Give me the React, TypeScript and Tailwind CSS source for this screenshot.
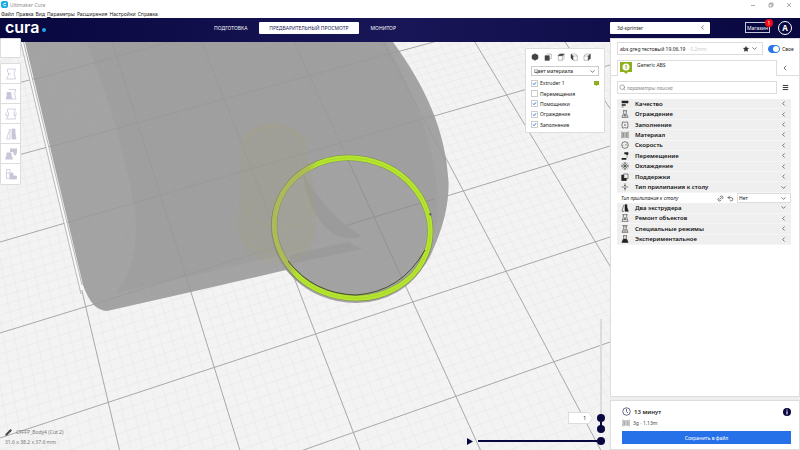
import { ReactNode } from "react";
import { ChevronDown, ChevronLeft, Link2, Menu, Pencil, Search, Star, Undo2 } from "lucide-react";

type Category = {
  name: string;
  icon: ReactNode;
  open?: boolean;
};

const menus = ["Файл", "Правка", "Вид", "Параметры", "Расширения", "Настройки", "Справка"];

const figure = "M2.500 1h8L9 5l1.500 6h-9L3.500 7V5L2.500 4z";

const categories: Category[] = [
  { name: "Качество", icon: <path d="M1 1h10v4H1zM1 6.500h6v2H1zM1 10h3v1H1z" fill="currentColor" stroke="none" /> },
  { name: "Ограждение", icon: <path d="M3 1h6M4 1v4L1.500 11h9L8 5V1M4.500 9l1-3h1l1 3z" /> },
  { name: "Заполнение", icon: <path d="M3.500 1.500H2v3L1 6l1 1.500v3h3l1-1 1 1h3v-3L11 6l-1-1.500v-3H7l-1 1-1-1zM5 5l2 2M7 5L5 7" /> },
  { name: "Материал", icon: <path d="M1.500 1v10M3.500 2v8M6 1.500v9M8.500 2v8M10.600 1v10" /> },
  {
    name: "Скорость",
    icon: (
      <>
        <circle cx="6" cy="6" r="5" />
        <path d="M6 6.500l2.500-2M2.500 6.500h1M8.500 6.500h1" />
      </>
    ),
  },
  { name: "Перемещение", icon: <path d="M5 .5h6v3L9 5.500 7.500 3.500H5zM1 9h7v2.500H1zM8 7h2v1H8z" fill="currentColor" stroke="none" /> },
  { name: "Охлаждение", icon: <path d="M6 .8v10.400M.8 6h10.400M2.300 2.300l7.400 7.400M9.700 2.300L2.300 9.700M4 1.500h4M4 10.500h4M1.500 4v4M10.500 4v4" /> },
  {
    name: "Поддержки",
    icon: (
      <>
        <path d="M4 1.500h6.500v7H4z" />
        <path d="M1 3h3v5h4v3.500H1z" fill="currentColor" />
      </>
    ),
  },
  { name: "Тип прилипания к столу", open: true, icon: <path d="M1 6h10M6 .5v4M4.500 3L6 4.500 7.500 3M6 11.500v-4M4.500 9L6 7.500 7.500 9" /> },
];

const extraCategories: Category[] = [
  {
    name: "Два экструдера",
    open: true,
    icon: (
      <>
        <path d="M4.500 1L3 5l-1.500 6h3" />
        <path d="M6 1h3v4l2 6H6z" fill="currentColor" />
      </>
    ),
  },
  { name: "Ремонт объектов", icon: <path d="M2 1h8M3.500 1v3.500L1.500 11h9L8.500 4.500V1M4 9l2-4 2 4M4.500 8h3" /> },
  { name: "Специальные режимы", icon: <path d="M2 1h8M4 1v4L1.500 11h9L8 5V1M5 3h2M4 7h4M3.500 9h5" /> },
  {
    name: "Экспериментальное",
    icon: (
      <>
        <path d="M3 1h6M4 1v4L1.500 11h9L8 5V1" />
        <path d="M4 6h4l2.500 5h-9z" fill="currentColor" />
      </>
    ),
  },
];

const toolIcons: ReactNode[] = [
  <>
    <path d={figure} />
    <path d="M3.500 6H6" />
  </>,
  <>
    <path d="M4 1.500h7L9.500 5l1.500 6H7" />
    <path d="M2 4.500h4V8l1 3H1l1-3z" fill="currentColor" />
  </>,
  <>
    <path d={figure} />
    <path d="M1 4.500v3h2M11 4.500v3H9" />
  </>,
  <>
    <path d="M5 1L3.500 5l-2 6H5z" />
    <path d="M7 1h3v4l1 6H7z" fill="currentColor" />
  </>,
  <path d="M1.500 4.500h5V7l1.500 4.500H0L1.500 7zM5 .5h7v4l-1 3-2-.5-1-3H5z" fill="currentColor" stroke="none" />,
  <>
    <path d="M1.500 1.500H5v9H1.500zM1.500 5H5" />
    <path d="M5 5h3v3h3.500v3H5z" fill="currentColor" />
  </>,
];

const viewIcons: ReactNode[] = [
  <path d="M6 1l4.500 2.500v5L6 11 1.500 8.500v-5z" fill="currentColor" />,
  <>
    <path d="M4 1.500h7v7H9" strokeWidth="0.5" />
    <path d="M1.500 4H8v7H1.500z" fill="currentColor" />
  </>,
  <>
    <path d="M2 4.500v6.500h6V4.500M8 11l2.500-2.500V2" strokeWidth="0.5" />
    <path d="M1.500 4L4 1.500h7L8.500 4z" fill="currentColor" />
  </>,
  <>
    <path d="M4.500 4.500H11V11H4.500L2 8.500M2 1.500h6.500L11 4.500" strokeWidth="0.5" />
    <path d="M1.500 1.500l3 3v6l-3-3z" fill="currentColor" />
  </>,
  <>
    <path d="M1.500 4.500H8V11H1.500zM1.500 4.500L4 1.500h7" strokeWidth="0.5" />
    <path d="M8 4.500l3-3v6.500l-3 3z" fill="currentColor" />
  </>,
];

const layers = [
  { name: "Extruder 1", on: true, color: true },
  { name: "Перемещения", on: false },
  { name: "Помощники", on: true },
  { name: "Ограждение", on: true },
  { name: "Заполнение", on: true },
];

// Build plate lines: where each one crosses the left and right edge of the view
const rows = [
  [22, -160],
  [88, -78],
  [160, -6],
  [242, 65],
  [333, 146],
  [438, 237],
  [557, 342],
  [690, 461],
];

const Icon = ({ children, className = "size-2" }: { children: ReactNode; className?: string }) => (
  <svg viewBox="0 0 12 12" fill="none" stroke="currentColor" strokeWidth="0.8" className={`shrink-0 ${className}`}>
    {children}
  </svg>
);

const Grid = () => {
  const minor: ReactNode[] = [];
  const major: ReactNode[] = [];
  for (let i = -20; i <= 70; i++) {
    const line = <line key={`c${i}`} x1={23.3 + i * 9.03} y1="42" x2={119.5 + i * 12.03} y2="450" />;
    (i % 10 === 0 && i >= 0 ? major : minor).push(line);
  }
  rows.slice(0, -1).forEach(([l, r], i) => {
    const [nl, nr] = rows[i + 1];
    for (let k = 0; k < 10; k++) {
      const line = <line key={`r${i}-${k}`} x1="0" y1={l + ((nl - l) * k) / 10} x2="610" y2={r + ((nr - r) * k) / 10} />;
      (k === 0 ? major : minor).push(line);
    }
  });
  return (
    <>
      <g stroke="#e8e8e8" strokeWidth="0.6">{minor}</g>
      <g stroke="#a8a8a8" strokeWidth="1">{major}</g>
    </>
  );
};

const ring = "M275.700 211.700A78.300 69.800 12 0 1 428.900 244.300A78.300 69.800 12 0 1 275.700 211.700Z";

const Scene = () => (
  <svg viewBox="0 42 610 408" preserveAspectRatio="xMinYMin slice" className="absolute inset-0 size-full">
    <defs>
      <linearGradient id="ring" gradientUnits="userSpaceOnUse" x1="286" y1="211" x2="313" y2="216">
        <stop offset="0" stopColor="#b0b762" />
        <stop offset="0.5" stopColor="#afbd55" />
        <stop offset="0.8" stopColor="#b5e52e" />
      </linearGradient>
      <clipPath id="body">
        <path d="M25 42L83 285Q92 311 107 311L191 292 286 270 Q310 298 357 300C400 298 425 270 432 252Q449 215 448.600 183C446 130 425 86 393 42Z" />
      </clipPath>
    </defs>
    <rect y="42" width="610" height="408" fill="#f3f3f3" />
    <Grid />
    <path d="M22 42L82 290" stroke="#fafafa" strokeWidth="3" />
    <path d="M20.700 42L81 294M23.500 42L82 285" stroke="#a9a9a9" strokeWidth="0.8" />
    <g clipPath="url(#body)">
      <rect y="42" width="460" height="270" fill="#a4a4a4" />
      <path d="M86 42C110 100 128 160 136 222Q138 270 115 293L190 276 286 254 400 290 436 225Q446 150 386 42Z" fill="#9f9f9f" />
      <ellipse cx="352" cy="228" rx="78" ry="70" transform="rotate(12 352 228)" fill="#a3a3a3" />
      <g opacity="0.03">
        <Grid />
      </g>
      <path d="M202 42L294 278M294 42L348 160M112 42L191 292M383 42L448 165M21 83L170 42M20 155L432 42M65 223L436 115M85 307L275 247" stroke="#949494" strokeWidth="0.5" />
      <path d="M348 160L406 287M338 228L434 199" stroke="#8e8e8e" strokeWidth="0.8" />
      <path d="M303 173C318 200 338 222 362 236Q352 241 336 235C318 225 306 200 303 173zM290 255L348 242 362 249 290 264z" fill="#9b9b9b" />
      <g fill="#a6a17b" opacity="0.2">
        <path d="M240 150C240 115 305 112 308 150L317 212C317 250 302 268 276 263 245 262 237 240 238 215z" />
        <path d="M255 152Q263 156 272 155V184Q292 190 309 180L317 215Q310 245 290 252 262 252 256 200z" />
        <path d="M243 190Q258 176 272 178V186Q252 192 244 206z" />
      </g>
      <g fill="none" stroke="#aaa478" strokeWidth="1" opacity="0.5">
        <path d="M242 145C250 122 294 118 307 148" />
        <path d="M250 196Q240 208 254 220 272 232 300 224 316 208 306 190" />
        <path d="M239 226Q250 254 280 253Q305 252 313 226" />
      </g>
    </g>
    <ellipse cx="352" cy="229" rx="79" ry="71" transform="rotate(12 352 229)" fill="none" stroke="#888" strokeWidth="5" opacity="0.75" />
    <path d={ring} fill="none" stroke="#71853a" strokeWidth="6" opacity="0.7" />
    <path d={ring} fill="none" stroke="url(#ring)" strokeWidth="5" />
    <path d={ring} fill="none" stroke="#9ccc22" strokeWidth="0.8" opacity="0.6" />
    <path d="M288 261Q314 294 356 295 401 292 425 250" fill="none" stroke="#44531f" strokeWidth="1" />
    <path d="M429 213l3 1-2 2z" fill="#555" />
  </svg>
);

const CategoryRow = ({ name, icon, open }: Category) => (
  <button className="flex items-center border-b border-[#f5f5f5] bg-[#efefef] pr-1 pl-1 text-left">
    <Icon>{icon}</Icon>
    <span className="ml-[6px] flex-1 text-[6px] leading-[8px] font-semibold text-[#111]">{name}</span>
    {open ? <ChevronDown className="size-[7px]" /> : <ChevronLeft className="size-[7px]" />}
  </button>
);

const App = () => {
  return (
    <div className="flex h-screen flex-col overflow-hidden bg-white font-['Noto_Sans',sans-serif] text-[5px] leading-[8px] text-[#222]">
      <div className="flex h-[9px] items-center justify-between pr-2">
        <div className="flex items-center gap-[2px] pl-px text-[#8d8d8d]">
          <svg viewBox="0 0 14 14" className="size-[7px]">
            <rect width="14" height="14" rx="4" fill="#16a9e8" />
            <path d="M10 4.500H6.500L4.500 7l2 2.500H10" fill="none" stroke="#fff" strokeWidth="2" />
          </svg>
          <span>Ultimaker Cura</span>
        </div>
        <svg viewBox="0 0 42 6" className="h-[6px] w-[42px]" fill="none" stroke="#888" strokeWidth="0.7">
          <path d="M1 3.500h4M37 1l4 4M41 1l-4 4M19 2h3v3h-3zM20 2V1h3v3h-1" />
        </svg>
      </div>
      <nav className="flex h-[9px] items-center gap-[2px] pl-px">
        {menus.map((m) => (
          <button key={m} className={m === "Параметры" ? "first-letter:underline" : ""}>
            {m}
          </button>
        ))}
      </nav>

      <header className="grid h-6 shrink-0 grid-cols-[1fr_auto_1fr] items-center bg-linear-to-r from-[#08073f] via-[#191657] to-[#08073f] pb-[5px] text-white">
        <div className="flex items-center pl-[5px]">
          <span className="font-['Inter',sans-serif] text-[16px] leading-[13px] font-semibold">cura</span>
          <span className="mt-1 ml-[2px] size-1 rounded-full bg-[#1fa7e8]" />
        </div>
        <div className="mr-[190px] flex items-center gap-3 text-[5px] leading-[12px]">
          <button>ПОДГОТОВКА</button>
          <button className="rounded-[1px] bg-white px-[10px] text-[#191657]">ПРЕДВАРИТЕЛЬНЫЙ ПРОСМОТР</button>
          <button>МОНИТОР</button>
        </div>
        <div className="flex w-[190px] items-center justify-self-end">
          <button className="flex h-3 w-[100px] items-center justify-between rounded-[1px] bg-white pr-1 pl-[7px] text-[5px] text-[#191919]">
            3d-sprinter
            <ChevronLeft className="size-[7px]" />
          </button>
          <button className="relative ml-[35px] h-[11px] w-[25px] border border-[#c8c8dd] text-[5px] whitespace-nowrap">
            Магазин
            <span className="absolute -top-1 -right-1 size-2 rounded-full bg-[#f20a14] text-center">1</span>
          </button>
          <button className="ml-2 size-[14px] rounded-full border border-white text-[8px] leading-[12px] font-bold">A</button>
        </div>
      </header>

      <main className="relative flex min-h-0 flex-1">
        <section className="relative flex min-w-0 flex-1 justify-between">
          <Scene />
          <div className="relative -mt-1 flex w-[21px] flex-col justify-between">
            <div>
              <div className="h-5 rounded-r-[1px] border border-[#ddd] bg-white" />
              <div className="mt-[5px] flex flex-col rounded-r-[1px] border border-[#ddd] bg-white text-[#c8c7d9]">
                {toolIcons.map((icon, i) => (
                  <button key={i} className="flex h-5 items-center justify-center border-b border-[#ddd] last:border-b-0">
                    <Icon className="size-3">{icon}</Icon>
                  </button>
                ))}
              </div>
            </div>
            <div className="mb-1 pl-[5px] whitespace-nowrap text-[#777]">
              <p className="flex items-center gap-1">
                <Pencil className="size-[7px] shrink-0 fill-[#444] text-[#444]" />
                CFFFP_Body4 (Cut 2)
              </p>
              <p className="mt-[2px]">31.6 x 38.2 x 37.6 mm</p>
            </div>
          </div>

          <div className="relative flex flex-col items-end justify-between pt-[6px] pr-[5px] pb-[5px]">
            <div className="w-20 rounded-[1px] border border-[#ddd] bg-white px-[5px] pt-1 pb-[2px]">
              <div className="flex gap-[5px] text-[#444]">
                {viewIcons.map((icon, i) => (
                  <button key={i}>
                    <Icon>{icon}</Icon>
                  </button>
                ))}
              </div>
              <div className="mt-[5px] grid h-[10px] items-center border border-[#ccc]">
                <select aria-label="Цветовая схема" className="h-2 appearance-none px-[2px] [grid-area:1/1]">
                  <option>Цвет материала</option>
                </select>
                <ChevronDown className="mr-[2px] size-[7px] justify-self-end [grid-area:1/1]" />
              </div>
              <div className="mt-[2px] grid h-[52px] auto-rows-fr">
                {layers.map((l) => (
                  <label key={l.name} className="flex items-center gap-[2px]">
                    <span className="grid size-[7px]">
                      <input type="checkbox" defaultChecked={l.on} className="peer appearance-none border border-[#ccc] [grid-area:1/1]" />
                      <svg viewBox="0 0 7 7" className="pointer-events-none invisible size-[7px] [grid-area:1/1] peer-checked:visible">
                        <path d="M2 3.500l1 1.200 2-2.400" fill="none" stroke="#2a75e8" strokeWidth="1" />
                      </svg>
                    </span>
                    <span className="flex-1">{l.name}</span>
                    {l.color && (
                      <svg viewBox="0 0 5 5" className="size-[5px]">
                        <path d="M0 0h5v4H3.500l-1 1-1-1H0z" fill="#8cb01b" />
                      </svg>
                    )}
                  </label>
                ))}
              </div>
            </div>

            <div className="flex flex-col items-end gap-1">
              <div className="flex items-end gap-1">
                <div className="mb-[9px] flex items-center">
                  <input aria-label="Слой" defaultValue="1" className="h-3 w-5 border border-r-0 border-[#ddd] bg-white pr-[2px] text-right text-[5px]" />
                  <svg viewBox="0 0 5 12" className="h-3 w-[5px]">
                    <path d="M0 .5h1L4.500 6 1 11.500H0" fill="#fff" stroke="#ddd" />
                  </svg>
                </div>
                <div className="flex w-2 flex-col">
                  <input
                    type="range"
                    aria-label="Верхний слой"
                    min={1}
                    max={100}
                    defaultValue={1}
                    className="h-[103px] w-2 appearance-none bg-[linear-gradient(#dcdcdc,#dcdcdc)] bg-size-[2px_100%] bg-center bg-no-repeat [direction:rtl] [writing-mode:vertical-lr] [&::-webkit-slider-thumb]:size-2 [&::-webkit-slider-thumb]:appearance-none [&::-webkit-slider-thumb]:rounded-full [&::-webkit-slider-thumb]:bg-[#08073f]"
                  />
                  <input
                    type="range"
                    aria-label="Нижний слой"
                    min={0}
                    max={1}
                    defaultValue={0}
                    className="h-[11px] w-2 appearance-none bg-[linear-gradient(#08073f,#08073f)] bg-size-[2px_9px] bg-top bg-no-repeat [direction:rtl] [writing-mode:vertical-lr] [&::-webkit-slider-thumb]:size-2 [&::-webkit-slider-thumb]:appearance-none [&::-webkit-slider-thumb]:rounded-full [&::-webkit-slider-thumb]:bg-[#08073f]"
                  />
                </div>
              </div>
              <div className="flex items-center gap-[5px]">
                <button aria-label="Воспроизвести">
                  <svg viewBox="0 0 6 7" className="h-[7px] w-[6px]">
                    <path d="M0 0l6 3.500L0 7z" fill="#08073f" />
                  </svg>
                </button>
                <input
                  type="range"
                  aria-label="Путь"
                  defaultValue={100}
                  className="h-2 w-[127px] appearance-none bg-[linear-gradient(#08073f,#08073f)] bg-size-[100%_2px] bg-center bg-no-repeat [&::-webkit-slider-thumb]:size-2 [&::-webkit-slider-thumb]:appearance-none [&::-webkit-slider-thumb]:rounded-full [&::-webkit-slider-thumb]:bg-[#08073f]"
                />
              </div>
            </div>
          </div>
        </section>

        <aside className="relative -mt-1 flex w-[190px] shrink-0 flex-col gap-[3px] bg-[#eee]">
          <div className="flex-1 border border-[#ddd] bg-white">
            <div className="flex items-center pt-[3px] pl-[6px]">
              <button className="flex h-[13px] w-[146px] items-center border border-[#ddd] px-[2px]">
                abs greg тестовый 19.06.19
                <span className="ml-[2px] flex-1 text-left text-[#ccc]">- 0.2mm</span>
                <Star className="size-[6px] fill-[#333] text-[#333]" />
                <ChevronDown className="mx-[2px] size-[7px]" />
              </button>
              <label className="ml-[5px] flex items-center gap-[2px]">
                <span className="grid items-center">
                  <input type="checkbox" defaultChecked className="h-2 w-3 appearance-none rounded-full border border-[#2a75e8] bg-[#2a75e8] [grid-area:1/1]" />
                  <span className="pointer-events-none mr-px size-[6px] justify-self-end rounded-full bg-white [grid-area:1/1]" />
                </span>
                Свое
              </label>
            </div>
            <div className="mt-[5px] flex h-4">
              <div className="w-[6px] border-b border-[#ddd]" />
              <button className="flex w-[160px] items-start gap-[5px] border border-b-0 border-[#ddd] px-[2px] pt-px text-left leading-[7px]">
                <svg viewBox="0 0 12 12" className="size-3">
                  <path d="M0 0h12v10H8l-2 2-2-2H0z" fill="#8cb01b" />
                  <circle cx="6" cy="5" r="3.500" fill="#fff" />
                  <path d="M5.300 3.800L6.200 3v4" fill="none" stroke="#8cb01b" strokeWidth="0.9" />
                </svg>
                Generic ABS
              </button>
              <button className="flex flex-1 items-center border-b border-[#ddd] pl-1" aria-label="Свернуть">
                <ChevronLeft className="size-2" />
              </button>
            </div>
            <div className="mt-[5px] flex items-center pl-[6px]">
              <label className="flex h-[13px] w-[160px] items-center gap-px border border-[#ddd] px-px">
                <Search className="size-[7px] text-[#777]" />
                <input type="search" aria-label="Поиск" placeholder="параметры поиска" className="min-w-0 flex-1 italic outline-none placeholder:text-[#888]" />
              </label>
              <button className="ml-[5px]" aria-label="Меню">
                <Menu className="size-[7px]" strokeWidth={3} />
              </button>
            </div>
            <div className="mt-[5px] mr-2 ml-[6px] grid h-[146px] auto-rows-fr">
              {categories.map((c) => (
                <CategoryRow key={c.name} {...c} />
              ))}
              <div className="flex items-center pl-1">
                <label htmlFor="adhesion" className="flex-1 italic">
                  Тип прилипания к столу
                </label>
                <Link2 className="size-[7px] -rotate-45" />
                <Undo2 className="mx-[3px] size-[7px]" />
                <div className="grid h-full w-[54px] items-center border border-[#ddd]">
                  <select id="adhesion" className="h-2 appearance-none pl-px [grid-area:1/1]">
                    <option>Нет</option>
                  </select>
                  <ChevronDown className="mr-[3px] size-[7px] justify-self-end [grid-area:1/1]" />
                </div>
              </div>
              {extraCategories.map((c) => (
                <CategoryRow key={c.name} {...c} />
              ))}
            </div>
          </div>

          <div className="border border-[#ddd] bg-white px-2 pt-[6px] pb-[5px] pl-[11px]">
            <div className="flex items-center gap-[3px] text-[6px] font-semibold">
              <Icon className="size-[9px] text-[#08073f]">
                <circle cx="6" cy="6" r="5" />
                <path d="M6 2.500V6l2 2" />
              </Icon>
              <span className="flex-1">13 минут</span>
              <svg viewBox="0 0 8 8" className="size-2">
                <circle cx="4" cy="4" r="4" fill="#08073f" />
                <path d="M4 1.500v1M4 3.200v3.300" stroke="#fff" strokeWidth="1.100" />
              </svg>
            </div>
            <div className="mt-[3px] flex items-center gap-[3px] text-[#444]">
              <Icon className="size-2">
                <path d="M1.500 1v10M3.500 2v8M6 1.500v9M8.500 2v8M10.600 1v10" />
              </Icon>
              3g · 1.13m
            </div>
            <button className="mt-1 h-[13px] w-full bg-[#2671e7] text-[5px] text-white">Сохранить в файл</button>
          </div>
        </aside>
      </main>
    </div>
  );
};

export default App;
